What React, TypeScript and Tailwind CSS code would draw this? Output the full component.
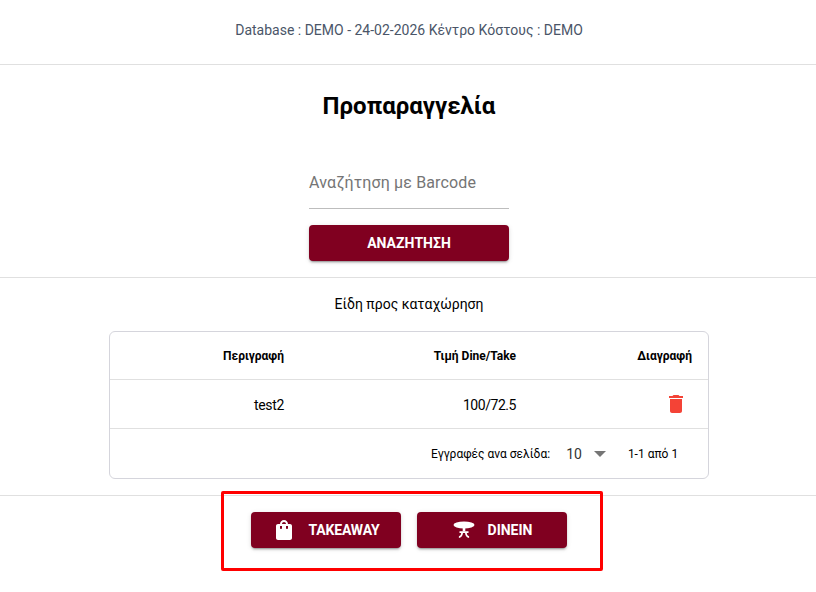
import React from "react";

const btn = "flex h-9 items-center justify-center rounded-[4px] bg-[#800020] text-sm font-bold uppercase leading-none text-white shadow-[0_3px_1px_-2px_rgba(0,0,0,0.2),0_2px_2px_0_rgba(0,0,0,0.14),0_1px_5px_0_rgba(0,0,0,0.12)]";

function Bag() {
  return (
    <svg width="24" height="24" viewBox="0 0 24 24" fill="currentColor">
      <path d="M18 6h-2c0-2.21-1.79-4-4-4S8 3.79 8 6H6c-1.1 0-2 .9-2 2v12c0 1.1.9 2 2 2h12c1.1 0 2-.9 2-2V8c0-1.1-.9-2-2-2zm-8 4c0 .55-.45 1-1 1s-1-.45-1-1V8h2v2zm2-6c1.1 0 2 .9 2 2h-4c0-1.1.9-2 2-2zm4 6c0 .55-.45 1-1 1s-1-.45-1-1V8h2v2z" />
    </svg>
  );
}

function Table() {
  return (
    <svg width="24" height="24" viewBox="0 0 24 24" fill="currentColor">
      <ellipse cx="12" cy="7" rx="10.500" ry="3.400" />
      <path d="M10.700 9.500h2.600v4h-2.600z" />
      <path d="M7.500 13.200h9v1.700h-1.700c.2 1.700 1 2.900 2.300 3.300V20c-2.200-.4-3.800-2.300-4.100-5.100h-2c-.3 2.800-1.900 4.700-4.100 5.100v-1.800c1.300-.4 2.100-1.600 2.300-3.300H7.500z" />
    </svg>
  );
}

function Trash() {
  return (
    <svg width="24" height="24" viewBox="0 0 24 24" fill="#f44336">
      <path d="M6 19c0 1.100.9 2 2 2h8c1.100 0 2-.9 2-2V7H6v12zM19 4h-3.500l-1-1h-5l-1 1H5v2h14V4z" />
    </svg>
  );
}

export default function App() {
  return (
    <div className="min-h-[592px] overflow-hidden bg-white font-['Roboto',sans-serif] text-black">
      <div className="w-[818px]">
        <div className="flex h-[65px] items-center justify-center border-b border-[#e0e0e0] pb-[5px] text-sm text-[#4a5568]">
          Database : DEMO - 24-02-2026 Κέντρο Κόστους : DEMO
        </div>

        <h1 className="mt-[25px] text-center text-2xl font-bold leading-[32px]">Προπαραγγελία</h1>

        <div className="mx-auto mt-[43px] w-[200px]">
          <div className="h-[44px] border-b border-[#bdbdbd] pt-[6px] text-base leading-[24px] tracking-[0.15px] text-[#757575]">
            Αναζήτηση με Barcode
          </div>
          <button className={`${btn} mt-4 w-full`}>ΑΝΑΖΗΤΗΣΗ</button>
        </div>

        <div className="mt-4 border-b border-[#e0e0e0]" />

        <p className="mt-4 text-center text-sm leading-[20px]">Είδη προς καταχώρηση</p>

        <div className="mx-auto mt-[17px] w-[600px] rounded-[6px] border border-[#d5d5dc] text-sm">
          <div className="flex h-[48px] items-center border-b border-[#e0e0e0] text-xs font-bold">
            <div className="w-[174px] text-right">Περιγραφή</div>
            <div className="w-[232px] text-right">Τιμή Dine/Take</div>
            <div className="w-[176px] text-right">Διαγραφή</div>
          </div>
          <div className="flex h-[49px] items-center border-b border-[#e0e0e0]">
            <div className="w-[174px] pt-[2px] text-right tracking-[-0.35px]">test2</div>
            <div className="w-[232px] pt-[2px] text-right tracking-[-0.45px]">100/72.5</div>
            <div className="flex w-[176px] justify-end pr-[4px]">
              <Trash />
            </div>
          </div>
          <div className="flex h-[49px] items-center text-xs">
            <span className="ml-[321px]">Εγγραφές ανα σελίδα:</span>
            <span className="ml-4 text-sm text-[#333]">10</span>
            <svg className="ml-[12px]" width="12" height="6" viewBox="0 0 12 6" fill="#757575">
              <path d="M0 0h12L6 6z" />
            </svg>
            <span className="ml-[22px]">1-1 από 1</span>
          </div>
        </div>

        <div className="mt-4 border-b border-[#e0e0e0]" />

        <div className="relative -mt-[5px] ml-[221px] flex h-[80px] w-[382px] items-center gap-4 rounded-[2px] border-[3px] border-[#ff0000] pb-[2px] pl-[27px]">
          <button className={`${btn} w-[150px] gap-[12px]`}>
            <Bag />
            <span className="tracking-[-0.15px]">TAKEAWAY</span>
          </button>
          <button className={`${btn} w-[150px] gap-[12px]`}>
            <Table />
            <span>DINEIN</span>
          </button>
        </div>
      </div>
    </div>
  );
}
